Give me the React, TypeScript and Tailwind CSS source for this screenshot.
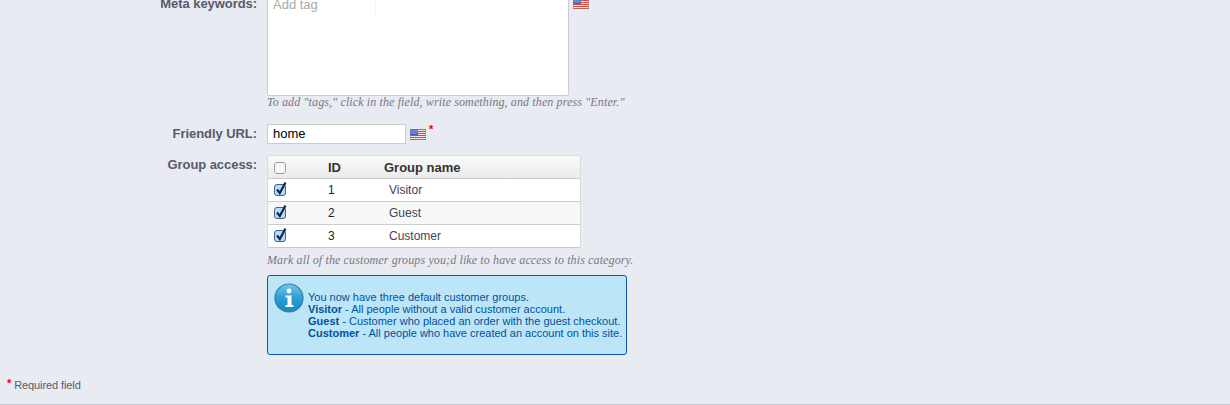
const sans = "font-['Liberation_Sans',Arial,sans-serif]";
const hint = "font-['Liberation_Serif',Georgia,serif] italic text-[12px] leading-[14px] tracking-[0.12px] text-[#787882]";

const FlagIcon = () => (
  <svg width="16" height="11" viewBox="0 0 16 11" className="block">
    <rect width="16" height="11" fill="#f7e6e6" />
    {[0, 2, 4, 6, 8, 10].map((y) => (
      <rect key={y} x="0" y={y} width="16" height="1" fill="#d4483f" />
    ))}
    <rect width="8" height="6" fill="#3f63bd" />
    {[1, 3, 5, 7].map((x) => (
      <rect key={x} x={x - 0.5} y="1.5" width="1" height="1" fill="#dfe7fa" />
    ))}
    {[2, 4, 6].map((x) => (
      <rect key={x} x={x - 0.5} y="3.5" width="1" height="1" fill="#dfe7fa" />
    ))}
    <rect x="0.5" y="0.5" width="15" height="10" fill="none" stroke="#8a7f90" strokeOpacity="0.5" />
  </svg>
);

const Check = ({ checked }: { checked: boolean }) => (
  <svg width="15" height="16" viewBox="0 0 15 16" className="block">
    <rect
      x="0.5"
      y="3.5"
      width="11"
      height="11"
      rx="2.5"
      fill={checked ? "#b5dcfb" : "#f6f6f6"}
      stroke={checked ? "#4a5f85" : "#a0a0a0"}
    />
    {checked && (
      <path d="M3 8.5 L5.8 12 L11.5 1.5" fill="none" stroke="#10284f" strokeWidth="2.2" />
    )}
  </svg>
);

const InfoIcon = () => (
  <svg width="30" height="30" viewBox="0 0 30 30" className="block">
    <defs>
      <linearGradient id="infoFill" x1="0" y1="0" x2="0" y2="1">
        <stop offset="0" stopColor="#7cc4e6" />
        <stop offset="0.5" stopColor="#2a9fd6" />
        <stop offset="1" stopColor="#1c86c0" />
      </linearGradient>
    </defs>
    <circle cx="15" cy="15" r="14" fill="url(#infoFill)" stroke="#2f7ea8" strokeWidth="1.2" />
    <circle cx="15" cy="8" r="2.4" fill="#fff" />
    <path d="M11.5 12.5 H17.5 V22 H19.5 V24 H11.5 V22 H13.5 V14.5 H11.5 Z" fill="#fff" />
  </svg>
);

const groups = [
  { id: 1, name: "Visitor", bg: "bg-white" },
  { id: 2, name: "Guest", bg: "bg-[#f8f8f8]" },
  { id: 3, name: "Customer", bg: "bg-white" },
];

const Label = ({ children }: { children: string }) => (
  <div className="w-[257px] shrink-0 text-right text-[13px] leading-[16px] font-bold tracking-[-0.06px] text-[#585a69]">
    {children}
  </div>
);

export default function App() {
  return (
    <div className={`${sans} h-[405px] overflow-hidden bg-[#e9ebf3] border-b border-[#c6c8d0]`}>
      {/* top of the keywords row is scrolled off the page */}
      <div className="-mt-[5px]">
        <div className="flex">
          <div className="pt-[1px]">
            <Label>Meta keywords:</Label>
          </div>
          <div className="ml-[10px]">
            <div className="flex items-start gap-[4px]">
              <div className="w-[302px] h-[101px] bg-white border border-[#cccccc] rounded-[2px]">
                <div className="w-[108px] h-[18px] border-r border-[#f4f4f4] pl-[5px] pt-[1px] text-[13px] leading-[16px] text-[#aaaaaa]">
                  Add tag
                </div>
              </div>
              <div className="mt-[3px]">
                <FlagIcon />
              </div>
            </div>
            <p className={`${hint} -mt-[1px]`}>
              To add "tags," click in the field, write something, and then press "Enter."
            </p>
          </div>
        </div>

        <div className="flex items-center mt-[15px]">
          <Label>Friendly URL:</Label>
          <div className="ml-[10px] flex items-center">
            <div className="w-[139px] h-[20px] bg-white border border-[#cccccc] pl-[5px] text-[13px] leading-[18px] text-black">
              home
            </div>
            <div className="ml-[4px]">
              <FlagIcon />
            </div>
            <span className="ml-[3px] -mt-[10px] text-[11px] leading-[12px] font-bold text-[#e60000]">*</span>
          </div>
        </div>

        <div className="flex mt-[11px]">
          <div className="pt-[2px]">
            <Label>Group access:</Label>
          </div>
          <div className="ml-[10px]">
            <div className="w-[314px] rounded-[3px] overflow-hidden border border-[#dcdcdc] border-b-[#c8c8c8]">
              <div className="flex items-center h-[22px] pt-[1px] bg-gradient-to-b from-[#fafafa] to-[#ebebeb] text-[13px] font-bold text-[#333333]">
                <div className="w-[60px] pl-[6px] -mt-[1px]">
                  <Check checked={false} />
                </div>
                <div className="w-[56px]">ID</div>
                <div>Group name</div>
              </div>
              {groups.map((g) => (
                <div
                  key={g.id}
                  className={`flex items-center h-[23px] ${g.bg} border-t border-[#cccccc] text-[12px] text-[#444452]`}
                >
                  <div className="w-[60px] pl-[6px] -mt-[2px]">
                    <Check checked={true} />
                  </div>
                  <div className="w-[61px] text-[#222222]">{g.id}</div>
                  <div>{g.name}</div>
                </div>
              ))}
            </div>
            <p className={`${hint} mt-[5px]`}>
              Mark all of the customer groups you;d like to have access to this category.
            </p>
            <div className="relative w-[360px] h-[80px] mt-[8px] bg-[#bde5f8] border border-[#0f5ba8] rounded-[3px] pl-[40px] pt-[15px] text-[11px] leading-[12px] text-[#00529b]">
              <div className="absolute left-[6px] top-[7px]">
                <InfoIcon />
              </div>
              <p>You now have three default customer groups.</p>
              <p>
                <b>Visitor</b> - All people without a valid customer account.
              </p>
              <p>
                <b>Guest</b> - Customer who placed an order with the guest checkout.
              </p>
              <p>
                <b>Customer</b> - All people who have created an account on this site.
              </p>
            </div>
          </div>
        </div>

        <div className="flex items-start mt-[24px] pl-[7px] text-[11px] leading-[12px] tracking-[-0.1px] text-[#585a69]">
          <span className="text-[#e60000] font-bold mr-[3px] -mt-[2px]">*</span>
          <span>Required field</span>
        </div>
      </div>
    </div>
  );
}
